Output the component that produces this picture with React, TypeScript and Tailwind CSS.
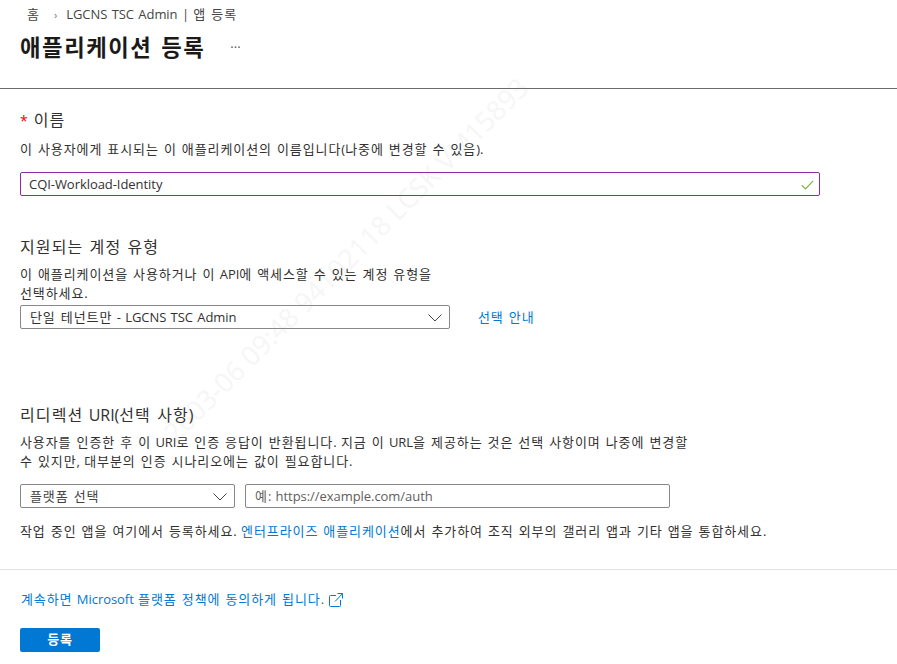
import React from "react";

const F = { fontFamily: '"Open Sans","Noto Sans CJK KR",sans-serif' };

function T({ children }: { children: string }) {
  const parts = children.split(/([\uac00-\ud7a3]+(?: +[\uac00-\ud7a3]+)*)/);
  return (
    <>
      {parts.map((p, i) =>
        i % 2 === 1 ? (
          <span key={i} className="tracking-[0.07em] [word-spacing:0.06em]">{p}</span>
        ) : (
          <span key={i} className="tracking-[-0.004em] [word-spacing:0.08em]">{p}</span>
        )
      )}
    </>
  );
}

function Chevron() {
  return (
    <svg width="14" height="8" viewBox="0 0 14 8" fill="none" stroke="#444" strokeWidth="1" className="shrink-0">
      <path d="M0.5 0.5 7 7 13.5 0.5" />
    </svg>
  );
}

export default function App() {
  return (
    <div className="relative w-[897px] h-[664px] overflow-hidden bg-white text-[#323130] text-[13px]" style={F}>
      <div className="absolute left-[76px] top-[240px] w-[540px] -rotate-45 text-center text-[27px] text-[#f6f6f6] whitespace-nowrap pointer-events-none">
        2603-06 09:48 94102118 LCSK VM15893
      </div>
      <div className="relative">
        <div className="h-[89px] border-b border-[#6b6b6b] px-5">
          <div className="flex items-center h-[30px] pl-[7px] text-[#444]">
            <span><T>홈</T></span>
            <span className="ml-[14px] mr-[9px] text-[11px] text-[#777]">›</span>
            <span><T>LGCNS TSC Admin | 앱 등록</T></span>
          </div>
          <div className="flex items-center h-[36px]">
            <h1 className="text-[22.3px] font-bold text-[#1b1a19]"><T>애플리케이션 등록</T></h1>
            <span className="ml-[25px] text-[13px] text-[#555]">···</span>
          </div>
        </div>
        <div className="px-5">
          <div className="mt-[21px] flex items-center h-[20px] text-[16px]">
            <span className="text-[#e00] text-[14px] mr-[6px]">*</span>
            <span><T>이름</T></span>
          </div>
          <p className="mt-[9px] leading-[20px]"><T>이 사용자에게 표시되는 이 애플리케이션의 이름입니다(나중에 변경할 수 있음).</T></p>
          <div className="mt-[13px] w-[800px] h-[24px] pt-px flex items-center justify-between rounded-[2px] border border-[#8a2da5] pl-[8px] pr-[5px]">
            <span><T>CQI-Workload-Identity</T></span>
            <svg width="13" height="10" viewBox="0 0 13 10" fill="none" stroke="#7cb342" strokeWidth="1.2">
              <path d="M0.8 5.2 4.4 8.8 12.2 0.8" />
            </svg>
          </div>
          <div className="mt-[40px] h-[20px] pt-px flex items-center text-[16px]"><span><T>지원되는 계정 유형</T></span></div>
          <p className="mt-[9px] w-[430px] leading-[19px] break-keep"><T>이 애플리케이션을 사용하거나 이 API에 액세스할 수 있는 계정 유형을 선택하세요.</T></p>
          <div className="mt-[2px] flex items-center">
            <div className="w-[430px] h-[24px] pt-px flex items-center justify-between rounded-[2px] border border-[#8a8886] pl-[9px] pr-[7px]">
              <span><T>단일 테넌트만 - LGCNS TSC Admin</T></span>
              <Chevron />
            </div>
            <a className="ml-[28px] pt-px text-[#0078d4]"><T>선택 안내</T></a>
          </div>
          <div className="mt-[76px] h-[20px] flex items-center text-[16px]"><span><T>리디렉션 URI(선택 사항)</T></span></div>
          <p className="mt-[8px] w-[680px] leading-[19px] break-keep"><T>사용자를 인증한 후 이 URI로 인증 응답이 반환됩니다. 지금 이 URL을 제공하는 것은 선택 사항이며 나중에 변경할 수 있지만, 대부분의 인증 시나리오에는 값이 필요합니다.</T></p>
          <div className="mt-[13px] flex gap-[10px]">
            <div className="w-[215px] h-[24px] pt-px flex items-center justify-between rounded-[2px] border border-[#8a8886] pl-[9px] pr-[7px] text-[#444]">
              <span><T>플랫폼 선택</T></span>
              <Chevron />
            </div>
            <div className="w-[425px] h-[24px] pt-px flex items-center rounded-[2px] border border-[#8a8886] pl-[9px] text-[#605e5c]">
              <span><T>예: https://example.com/auth</T></span>
            </div>
          </div>
          <p className="mt-[13px] leading-[20px] whitespace-nowrap">
            <T>작업 중인 앱을 여기에서 등록하세요. </T><a className="text-[#0078d4]"><T>엔터프라이즈 애플리케이션</T></a><T>에서 추가하여 조직 외부의 갤러리 앱과 기타 앱을 통합하세요.</T>
          </p>
        </div>
        <div className="mt-[28px] border-t border-[#e1e1e1] px-5">
          <div className="mt-[20px] h-[20px] pl-px flex items-center text-[#0078d4]">
            <span><T>계속하면 Microsoft 플랫폼 정책에 동의하게 됩니다.</T></span>
            <svg className="ml-[5px]" width="14" height="14" viewBox="0 0 14 14" fill="none" stroke="#0078d4" strokeWidth="1">
              <path d="M7 2.5H1.5a1 1 0 0 0-1 1V12.5a1 1 0 0 0 1 1H10.5a1 1 0 0 0 1-1V7M6 8.5 13.3 0.8M8.5 0.5H13.5V5.5" />
            </svg>
          </div>
          <button className="mt-[18px] block w-[80px] h-[24px] rounded-[2px] bg-[#0078d4] text-white text-[13px] font-bold"><T>등록</T></button>
        </div>
      </div>
    </div>
  );
}
